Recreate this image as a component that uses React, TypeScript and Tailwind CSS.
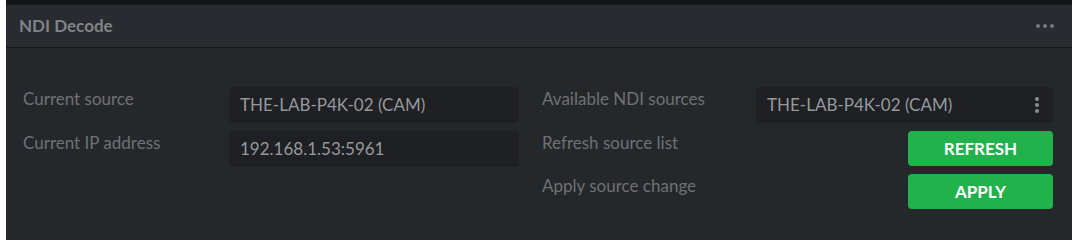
const FONT = "font-['Lato','Noto_Sans',sans-serif]";

function Label({ children }: { children: React.ReactNode }) {
  return <div className="pt-[1px] text-[17px] leading-[22px] text-[#6e7175]">{children}</div>;
}

function Field({ children }: { children: React.ReactNode }) {
  return (
    <div className="flex h-[36px] items-center rounded-[4px] bg-[#1e2023] px-[11px] text-[17px] text-[#96999d]">
      {children}
    </div>
  );
}

function GreenButton({ label }: { label: string }) {
  return (
    <button className="ml-auto flex h-[35px] w-[145px] items-center justify-center rounded-[4px] bg-[#21b24b] text-[17px] font-bold text-white">
      {label}
    </button>
  );
}

export default function App() {
  return (
    <div className={`h-[244px] w-[1082px] bg-white ${FONT}`}>
      <div className="ml-[6px] flex h-[240px] w-[1066px] flex-col border-t-[5px] border-[#151617] bg-[#25282b]">
        <div className="flex h-[43px] shrink-0 items-center justify-between border-b border-[#17181a] bg-[#282b2f] pl-[13px] pr-[18px]">
          <span className="text-[17px] font-bold text-[#808387]">NDI Decode</span>
          <div className="flex gap-[3px]">
            <span className="h-[4px] w-[4px] rounded-full bg-[#74777b]" />
            <span className="h-[4px] w-[4px] rounded-full bg-[#74777b]" />
            <span className="h-[4px] w-[4px] rounded-full bg-[#74777b]" />
          </div>
        </div>
        <div className="flex items-start gap-[23px] pl-[17px] pt-[39px]">
          <div className="grid grid-cols-[206px_290px] gap-y-[8px]">
            <Label>Current source</Label>
            <Field>THE-LAB-P4K-02 (CAM)</Field>
            <Label>Current IP address</Label>
            <Field>192.168.1.53:5961</Field>
          </div>
          <div className="grid grid-cols-[214px_297px] gap-y-[8px]">
            <Label>Available NDI sources</Label>
            <div className="flex h-[36px] items-center justify-between rounded-[4px] bg-[#1e2023] pl-[11px] pr-[14px] text-[17px] text-[#96999d]">
              <span>THE-LAB-P4K-02 (CAM)</span>
              <div className="flex flex-col gap-[2px]">
                <span className="h-[4px] w-[4px] rounded-full bg-[#8a8d91]" />
                <span className="h-[4px] w-[4px] rounded-full bg-[#8a8d91]" />
                <span className="h-[4px] w-[4px] rounded-full bg-[#8a8d91]" />
              </div>
            </div>
            <Label>Refresh source list</Label>
            <GreenButton label="REFRESH" />
            <Label>Apply source change</Label>
            <GreenButton label="APPLY" />
          </div>
        </div>
      </div>
    </div>
  );
}
